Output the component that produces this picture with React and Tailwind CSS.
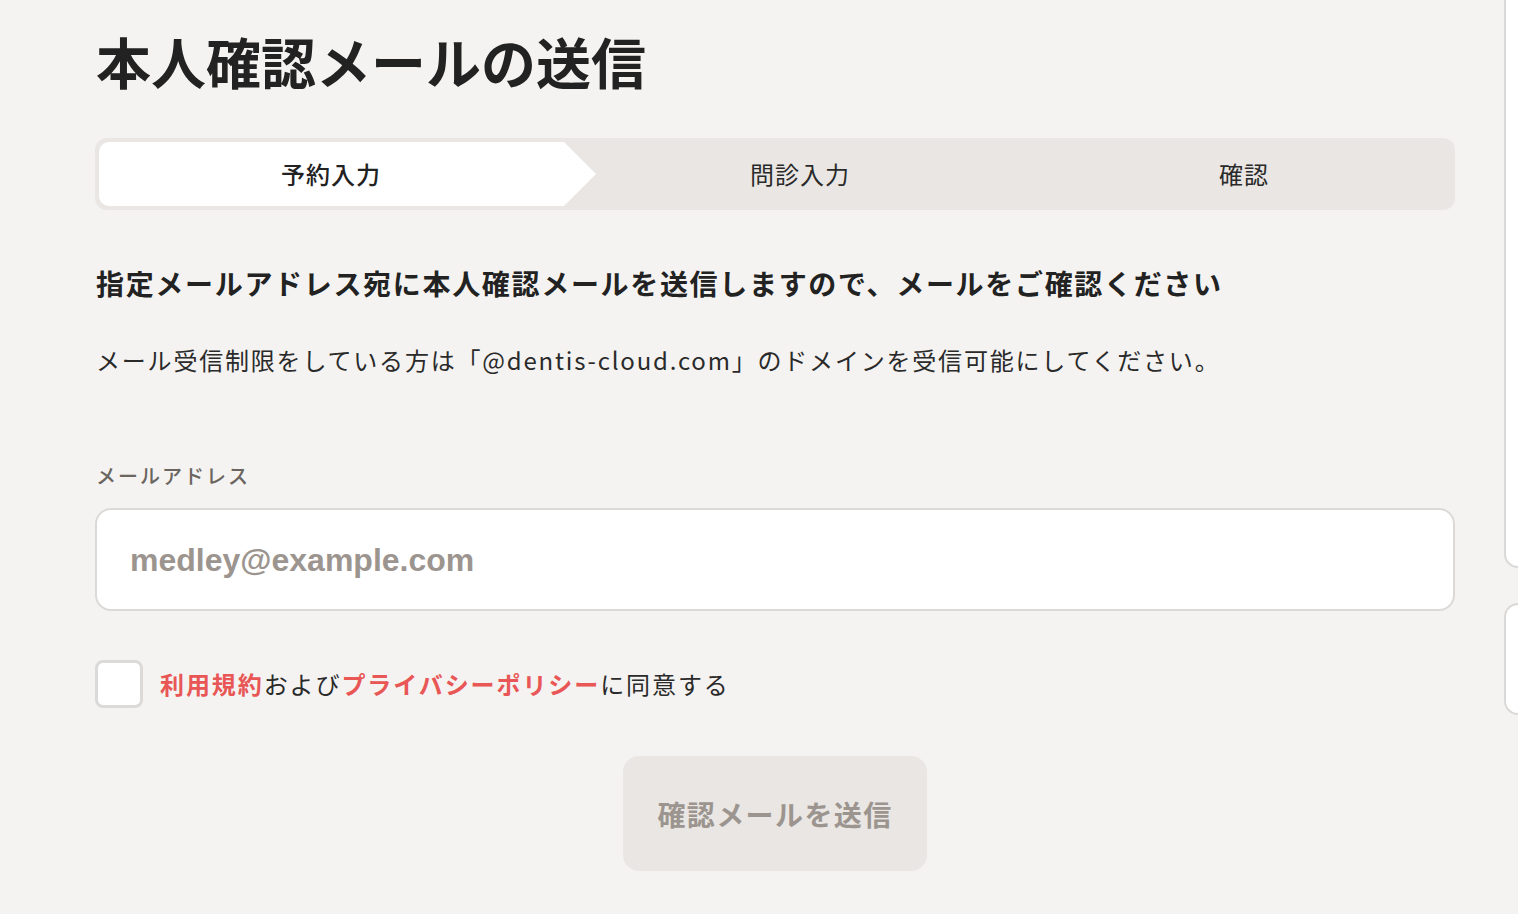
const jp = "font-['Noto_Sans_CJK_JP',sans-serif]";

const steps = [
  { label: "予約入力", width: "w-[464px]", active: true },
  { label: "問診入力", width: "w-[474px]", active: false },
  { label: "確認", width: "w-[414px]", active: false },
];

function Stepper() {
  return (
    <div className="mt-[45px] flex h-[72px] w-[1360px] -ml-px rounded-[12px] bg-[#e9e6e3] p-[4px]">
      {steps.map((step) =>
        step.active ? (
          <div
            key={step.label}
            className={`relative z-10 flex ${step.width} items-center justify-center rounded-l-[10px] bg-white`}
          >
            <span className="text-[24px] font-medium tracking-[0.04em] text-[#222]">{step.label}</span>
            <svg
              className="absolute left-full top-0 h-[64px] w-[34px]"
              viewBox="0 0 34 64"
              preserveAspectRatio="none"
            >
              <polygon points="0,0 1,0 33,32 1,64 0,64" fill="#ffffff" />
            </svg>
          </div>
        ) : (
          <div key={step.label} className={`flex ${step.width} items-center justify-center`}>
            <span className="text-[24px] tracking-[0.04em] text-[#2a2a2a]">{step.label}</span>
          </div>
        )
      )}
    </div>
  );
}

export default function App() {
  return (
    <div className={`flex min-h-[914px] w-full overflow-hidden bg-[#f4f3f1] ${jp}`}>
      <main className="ml-[96px] w-[1358px] shrink-0 pt-[27px]">
        <h1 className="text-[55px] font-bold leading-[66px] text-[#222]">本人確認メールの送信</h1>

        <Stepper />

        <p className="mt-[52px] text-[28px] font-bold leading-[42px] tracking-[0.06em] text-[#222]">
          指定メールアドレス宛に本人確認メールを送信しますので、メールをご確認ください
        </p>
        <p className="mt-[38px] text-[24px] leading-[36px] tracking-[0.075em] text-[#2a2a2a]">
          メール受信制限をしている方は「@dentis-cloud.com」のドメインを受信可能にしてください。
        </p>

        <label className="mt-[83px] block text-[20px] font-medium leading-[30px] tracking-[0.1em] text-[#6b6560]">
          メールアドレス
        </label>
        <div className="mt-[17px] -ml-px flex h-[103px] w-[1360px] items-center rounded-[16px] border-2 border-[#dbd9d7] bg-white pl-[33px]">
          <span className="font-['Liberation_Sans',sans-serif] text-[32px] font-bold text-[#9c958f]">
            medley@example.com
          </span>
        </div>

        <div className="mt-[49px] flex items-center gap-[17px]">
          <div className="-ml-px h-[48px] w-[48px] rounded-[8px] border-[3px] border-[#dcdad8] bg-white" />
          <p className="text-[24px] leading-[36px] tracking-[0.08em] text-[#2a2a2a]">
            <span className="font-bold text-[#e85656]">利用規約</span>および
            <span className="font-bold text-[#e85656]">プライバシーポリシー</span>に同意する
          </p>
        </div>

        <div className="mt-[48px] flex justify-center">
          <button className="flex h-[115px] w-[304px] items-center justify-center rounded-[16px] bg-[#e9e6e3] text-[28px] font-bold tracking-[0.05em] text-[#9c958f]">
            確認メールを送信
          </button>
        </div>
      </main>

      <aside className="ml-[50px] flex flex-1 flex-col">
        <div className="-mt-[20px] h-[588px] rounded-bl-[16px] border-b-2 border-l-2 border-[#dbd9d7] bg-white" />
        <div className="mt-[35px] h-[112px] rounded-l-[16px] border-y-2 border-l-2 border-[#dbd9d7] bg-white" />
      </aside>
    </div>
  );
}
